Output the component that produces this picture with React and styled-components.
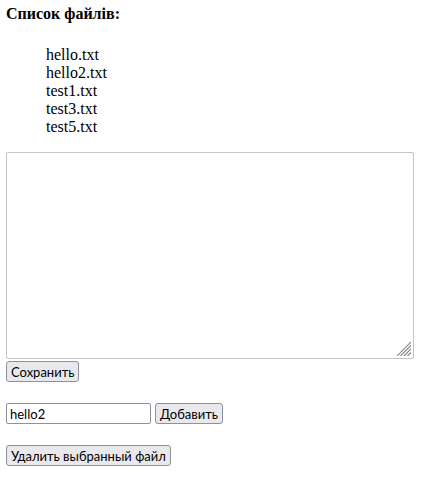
import React from "react";
import styled, { createGlobalStyle } from "styled-components";

const Global = createGlobalStyle`
  html, body { margin: 0; padding: 0; background: #fff; }
  body { font-family: "Liberation Serif", "Times New Roman", serif; font-size: 16px; color: #000; }
`;

const Page = styled.div`
  padding: 3px 6px 0 6px;
  display: flex;
  flex-direction: column;
  align-items: flex-start;
`;

const Heading = styled.h4`
  margin: 0;
  font-size: 16px;
  font-weight: bold;
  line-height: 22px;
`;

const FileList = styled.ul`
  list-style: none;
  margin: 21px 0 0 0;
  padding: 0 0 0 40px;
  line-height: 18px;
`;

const FileItem = styled.li`
  margin: 0;
`;

const EditorWrap = styled.div`
  position: relative;
  margin-top: 16px;
  width: 408px;
  height: 207px;
`;

const Editor = styled.textarea`
  box-sizing: border-box;
  display: block;
  width: 100%;
  height: 100%;
  margin: 0;
  border: 1px solid #c4c4c4;
  border-radius: 2px;
  padding: 2px;
  font-family: "Liberation Mono", monospace;
  font-size: 13px;
  resize: none;
  outline: none;
`;

const Grip = styled.svg`
  position: absolute;
  right: 3px;
  bottom: 3px;
  width: 14px;
  height: 14px;
  pointer-events: none;
`;

const Button = styled.button`
  box-sizing: border-box;
  height: 21px;
  padding: 0 4px;
  margin: ${(p) => p.$top || 0}px 0 0 0;
  font-family: Lato, "Liberation Sans", Arial, sans-serif;
  font-size: 13px;
  color: #000;
  background: #e9e9ed;
  border: 1px solid #8f8f9d;
  border-radius: 3px;
  line-height: 18px;
  cursor: default;
`;

const Row = styled.div`
  display: flex;
  align-items: center;
  gap: 4px;
  margin-top: 21px;
`;

const NameInput = styled.input`
  box-sizing: border-box;
  width: 145px;
  height: 21px;
  margin: 0;
  padding: 1px 3px;
  font-family: Lato, "Liberation Sans", Arial, sans-serif;
  font-size: 13px;
  color: #000;
  border: 1px solid #8f8f9d;
  border-radius: 2px;
  outline: none;
`;

const files = ["hello.txt", "hello2.txt", "test1.txt", "test3.txt", "test5.txt"];

export default function App() {
  return (
    <>
      <Global />
      <Page>
        <Heading>Список файлів:</Heading>
        <FileList>
          {files.map((f) => (
            <FileItem key={f}>{f}</FileItem>
          ))}
        </FileList>
        <EditorWrap>
          <Editor />
          <Grip viewBox="0 0 14 14">
            {[0, 3.5, 7, 10.5].map((k) => (
              <line key={k} x1={k} y1={14} x2={14} y2={k} stroke="#8a8a8a" strokeWidth="1.2" />
            ))}
          </Grip>
        </EditorWrap>
        <Button $top={2}>Сохранить</Button>
        <Row>
          <NameInput defaultValue="hello2" />
          <Button>Добавить</Button>
        </Row>
        <Button $top={21}>Удалить выбранный файл</Button>
      </Page>
    </>
  );
}
